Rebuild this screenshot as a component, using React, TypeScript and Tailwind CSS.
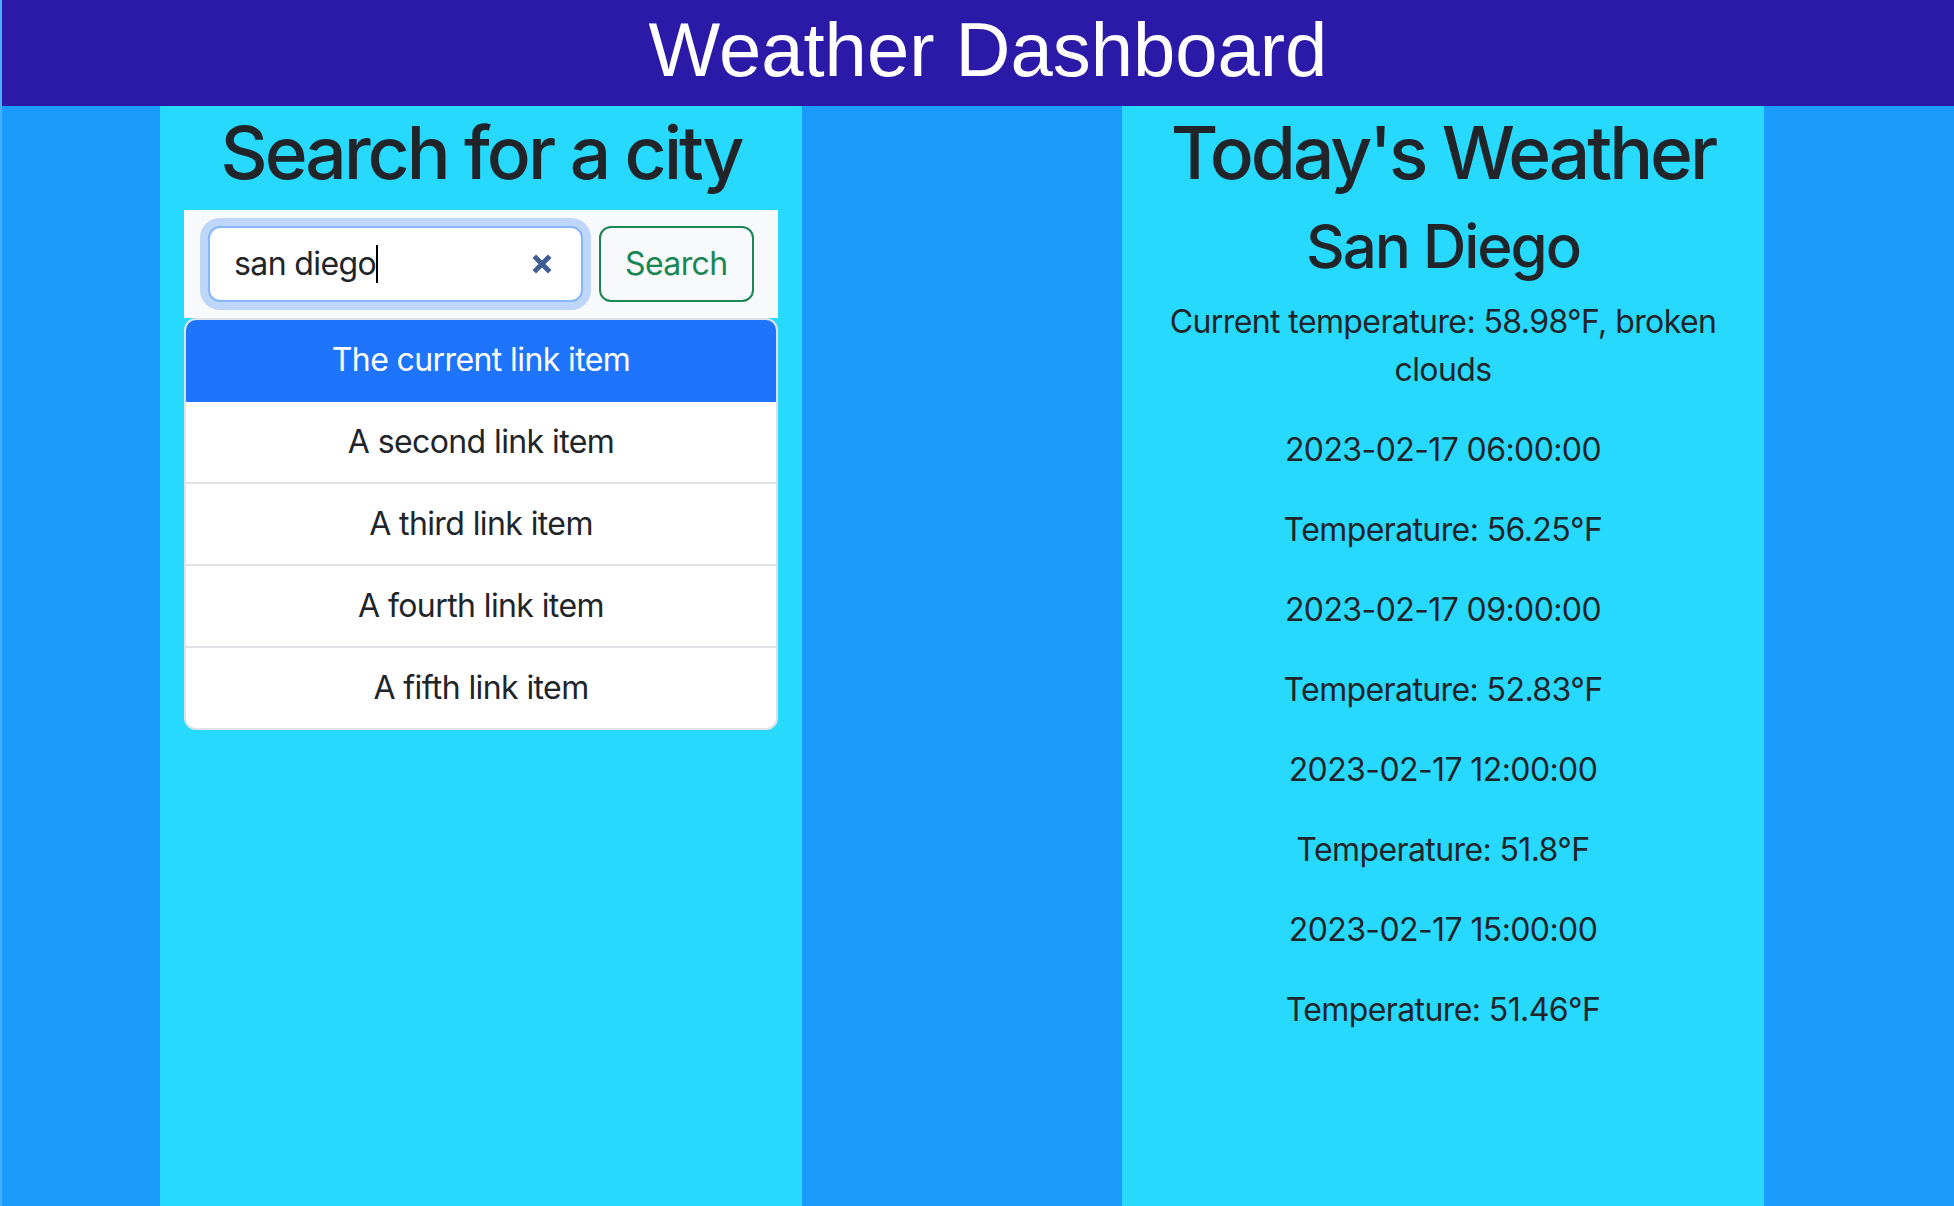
const FORECAST = [
  { time: "2023-02-17 06:00:00", temp: "56.25" },
  { time: "2023-02-17 09:00:00", temp: "52.83" },
  { time: "2023-02-17 12:00:00", temp: "51.8" },
  { time: "2023-02-17 15:00:00", temp: "51.46" },
];

const LINK_ITEMS = [
  "A second link item",
  "A third link item",
  "A fourth link item",
  "A fifth link item",
];

export default function App() {
  return (
    <div className="flex min-h-screen flex-col border-l-2 border-white/20 bg-[#1b9cfc] font-['Inter','Noto_Sans',sans-serif] tracking-[-0.6px] text-[#212529]">
      <header className="h-[106px] bg-[#2b19a8] pt-[12px] pl-[20px] text-center font-['Liberation_Sans',Arial,sans-serif] text-[76px] leading-none tracking-normal text-white">
        Weather Dashboard
      </header>

      <main className="flex flex-1 gap-[320px] pl-[158px]">
        <SearchColumn />
        <WeatherColumn />
      </main>
    </div>
  );
}

function SearchColumn() {
  return (
    <section className="w-[642px] bg-[#27d9fd] px-6">
      <h1 className="mb-[13px] pt-[3px] text-center text-[73px] font-medium leading-[88px] tracking-[-3px]">
        Search for a city
      </h1>

      <nav className="flex items-center gap-4 bg-[#f8f9fa] px-6 py-4">
        <div className="flex h-[76px] w-[375px] items-center rounded-xl border-2 border-[#86b7fe] bg-white pl-6 pr-7 text-[32px] shadow-[0_0_0_8px_rgba(13,110,253,0.25)]">
          <span>san diego</span>
          <span className="h-[38px] w-[2px] bg-black" />
          <ClearGlyph />
        </div>
        <button
          type="button"
          className="h-[76px] rounded-xl border-2 border-[#198754] px-6 text-[32px] text-[#198754]"
        >
          Search
        </button>
      </nav>

      <ul className="overflow-hidden rounded-xl border-2 border-[#dee2e6] bg-white text-center text-[32px] leading-[48px]">
        <li className="-mx-[2px] -mt-[2px] border-2 border-[#1e75fb] bg-[#1e75fb] py-4 text-white">
          The current link item
        </li>
        {LINK_ITEMS.map((item) => (
          <li key={item} className="border-b-2 border-[#dee2e6] py-4 last:border-b-0">
            {item}
          </li>
        ))}
      </ul>
    </section>
  );
}

function WeatherColumn() {
  return (
    <section className="w-[642px] bg-[#27d9fd] px-6 text-center">
      <h1 className="mb-[13px] pt-[3px] text-[73px] font-medium leading-[88px] tracking-[-3px]">
        Today's Weather
      </h1>
      <h2 className="mb-4 text-[60px] font-medium leading-[72px] tracking-[-2px]">
        San Diego
      </h2>
      <p className="mb-8 text-[32px] leading-[48px]">
        Current temperature: 58.98°F, broken clouds
      </p>
      {FORECAST.map((slot) => (
        <div key={slot.time} className="text-[32px] leading-[48px]">
          <p className="mb-8">{slot.time}</p>
          <p className="mb-8">Temperature: {slot.temp}°F</p>
        </div>
      ))}
    </section>
  );
}

function ClearGlyph() {
  return (
    <svg
      aria-hidden="true"
      viewBox="0 0 20 20"
      className="ml-auto size-[22px] fill-none stroke-[#3d5d94]"
      strokeWidth="4.5"
    >
      <path d="M3 3l14 14M17 3 3 17" />
    </svg>
  );
}
